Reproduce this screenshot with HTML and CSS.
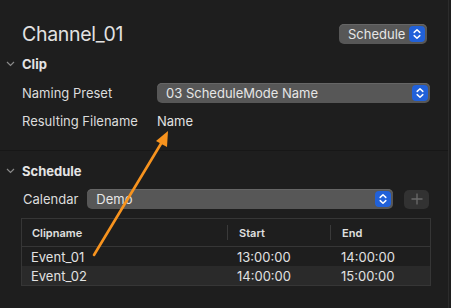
FILE: index.html
```html
<!DOCTYPE html>
<html>
<head>
<meta charset="utf-8">
<link rel="stylesheet" href="styles.css">
</head>
<body>
<div class="panel">
  <div class="title-row">
    <div class="title">Channel_01</div>
    <div class="popup popup-small">
      <span class="popup-text">Schedule</span>
      <span class="stepper"><svg width="16" height="16" viewBox="0 0 16 16"><path d="M5.2 6.4 L8 3.8 L10.8 6.4 M5.2 9.6 L8 12.2 L10.8 9.6" fill="none" stroke="#fff" stroke-width="1.5" stroke-linecap="round" stroke-linejoin="round"/></svg></span>
    </div>
  </div>

  <div class="section-head">
    <svg class="chev" width="9" height="6" viewBox="0 0 9 6"><path d="M1 1 L4.5 4.5 L8 1" fill="none" stroke="#8a8a8a" stroke-width="1.2"/></svg>
    <span>Clip</span>
  </div>

  <div class="row row-preset">
    <div class="label">Naming Preset</div>
    <div class="popup popup-wide">
      <span class="popup-text">03 ScheduleMode Name</span>
      <span class="stepper"><svg width="16" height="16" viewBox="0 0 16 16"><path d="M5.2 6.4 L8 3.8 L10.8 6.4 M5.2 9.6 L8 12.2 L10.8 9.6" fill="none" stroke="#fff" stroke-width="1.5" stroke-linecap="round" stroke-linejoin="round"/></svg></span>
    </div>
  </div>

  <div class="row row-result">
    <div class="label">Resulting Filename</div>
    <div class="value">Name</div>
  </div>

  <div class="separator"></div>

  <div class="section-head section-schedule">
    <svg class="chev" width="9" height="6" viewBox="0 0 9 6"><path d="M1 1 L4.5 4.5 L8 1" fill="none" stroke="#8a8a8a" stroke-width="1.2"/></svg>
    <span>Schedule</span>
  </div>

  <div class="row row-calendar">
    <div class="label cal-label">Calendar</div>
    <div class="popup popup-cal">
      <span class="popup-text">Demo</span>
      <span class="stepper"><svg width="16" height="16" viewBox="0 0 16 16"><path d="M5.2 6.4 L8 3.8 L10.8 6.4 M5.2 9.6 L8 12.2 L10.8 9.6" fill="none" stroke="#fff" stroke-width="1.5" stroke-linecap="round" stroke-linejoin="round"/></svg></span>
    </div>
    <div class="plus-btn"><svg width="12" height="12" viewBox="0 0 12 12"><path d="M6 0.5 V11.5 M0.5 6 H11.5" stroke="#6a6a6a" stroke-width="1.3"/></svg></div>
  </div>

  <div class="table">
    <div class="thead">
      <div class="th c1">Clipname</div>
      <div class="th c2">Start</div>
      <div class="th c3">End</div>
    </div>
    <div class="tr">
      <div class="td c1">Event_01</div>
      <div class="td c2">13:00:00</div>
      <div class="td c3">14:00:00</div>
    </div>
    <div class="tr alt">
      <div class="td c1">Event_02</div>
      <div class="td c2">14:00:00</div>
      <div class="td c3">15:00:00</div>
    </div>
  </div>

  <svg class="arrow" width="451" height="308" viewBox="0 0 451 308">
    <line x1="94" y1="255" x2="162" y2="142" stroke="#f7931e" stroke-width="2.6" stroke-linecap="round"/>
    <polygon points="168,131 156,141 167,147" fill="#f7931e"/>
  </svg>
</div>
</body>
</html>
```

FILE: styles.css
```css
html, body {
  margin: 0;
  padding: 0;
  background: #1e1e1e;
}
body {
  width: 451px;
  height: 308px;
  overflow: hidden;
  font-family: Inter, "Liberation Sans", sans-serif;
  color: #dcdcdc;
}
.panel {
  position: relative;
  width: 448px;
  height: 308px;
  border-right: 1px solid #2c2c2c;
}
.title-row {
  display: flex;
  align-items: center;
  justify-content: space-between;
  padding: 24px 21px 0 22px;
  height: 20px;
}
.title {
  font-size: 19.5px;
  line-height: 20px;
  color: #e2e2e2;
  letter-spacing: -0.3px;
}
.popup {
  display: flex;
  align-items: center;
  justify-content: space-between;
  background: #575757;
  border-radius: 5px;
  box-shadow: inset 0 1px 0 #666;
  box-sizing: border-box;
  padding: 0 2px 0 9px;
  font-size: 13px;
  color: #e6e6e6;
}
.popup-small {
  width: 88px;
  height: 20px;
}
.popup-wide {
  width: 273px;
  height: 20px;
}
.popup-cal {
  width: 306px;
  height: 20px;
}
.stepper {
  display: flex;
  width: 16px;
  height: 16px;
  border-radius: 4px;
  background: #2161d9;
}
.section-head {
  display: flex;
  align-items: center;
  height: 16px;
  margin-top: 12px;
  font-size: 13px;
  font-weight: 700;
  color: #e4e4e4;
}
.chev {
  margin-left: 6px;
  margin-right: 7px;
}
.row {
  display: flex;
  align-items: center;
  font-size: 13px;
}
.label {
  width: 135px;
  padding-left: 22px;
  color: #dcdcdc;
}
.row-preset {
  margin-top: 11px;
  height: 20px;
}
.row-result {
  margin-top: 9px;
  height: 18px;
}
.value {
  color: #e2e2e2;
}
.separator {
  margin-top: 20px;
  height: 1px;
  background: #171717;
}
.section-schedule {
  margin-top: 12px;
}
.row-calendar {
  margin-top: 10px;
  height: 20px;
}
.cal-label {
  width: auto;
  padding-left: 23px;
  margin-right: 9px;
}
.plus-btn {
  display: flex;
  align-items: center;
  justify-content: center;
  width: 25px;
  height: 19px;
  margin-left: 11px;
  border-radius: 5px;
  background: #323232;
}
.table {
  margin: 9px 0 0 21px;
  width: 410px;
  box-sizing: border-box;
  border: 1px solid #363636;
}
.thead {
  display: flex;
  height: 27px;
  border-bottom: 1px solid #363636;
  font-size: 11px;
  font-weight: 600;
  color: #e0e0e0;
}
.th {
  display: flex;
  align-items: center;
  box-sizing: border-box;
}
.thead .c2, .thead .c3 {
  border-left: 1px solid #3a3a3a;
  margin: 6px 0;
}
.c1 { width: 205px; padding-left: 10px; box-sizing: border-box; }
.c2 { width: 103px; padding-left: 11px; box-sizing: border-box; }
.c3 { flex: 1; padding-left: 11px; box-sizing: border-box; }
.td.c1 { padding-left: 9px; }
.td.c2 { padding-left: 10px; }
.td.c3 { padding-left: 11px; }
.tr {
  display: flex;
  align-items: center;
  height: 19px;
  font-size: 13px;
  color: #e2e2e2;
}
.tr.alt {
  background: #2a2a2a;
}
.arrow {
  position: absolute;
  left: 0;
  top: 0;
  pointer-events: none;
}
```
